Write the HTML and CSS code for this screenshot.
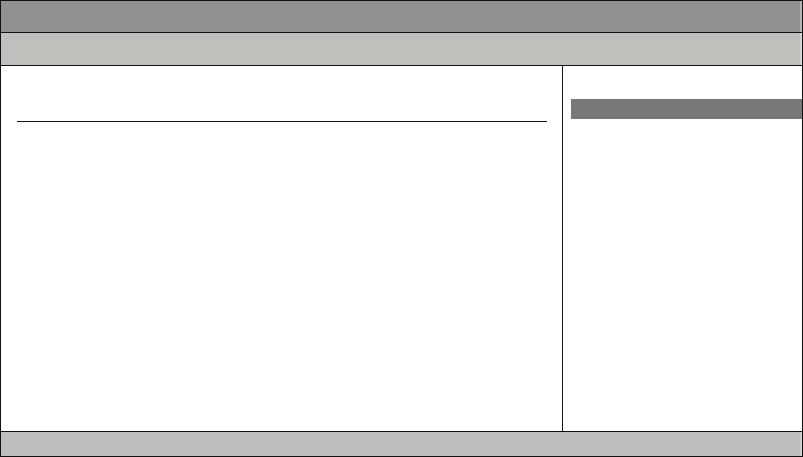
FILE: index.html
```html
<!DOCTYPE html>
<html lang="en">
<head>
<meta charset="utf-8">
<title>Setup</title>
<link rel="stylesheet" href="styles.css">
</head>
<body>
<div class="frame">
  <div class="title-bar"></div>
  <div class="menu-bar"></div>
  <div class="main">
    <div class="left-pane">
      <div class="rule"></div>
    </div>
    <div class="right-pane">
      <div class="help-bar"></div>
    </div>
  </div>
  <div class="status-bar"></div>
</div>
</body>
</html>
```
FILE: styles.css
```css
html, body {
  margin: 0;
  padding: 0;
  background: #ffffff;
  font-family: "Liberation Sans", Arial, sans-serif;
}
.frame {
  width: 803px;
  height: 457px;
  box-sizing: border-box;
  border: 1px solid #111111;
  display: flex;
  flex-direction: column;
}
.title-bar {
  height: 31px;
  background: #909290;
  border-bottom: 1px solid #111111;
  box-shadow: inset -2px 0 0 #b4b5b4;
}
.menu-bar {
  height: 32px;
  background: #c0bfbc;
  border-bottom: 1px solid #111111;
  box-shadow: inset -2px 0 0 #d4d3d1;
}
.main {
  height: 365px;
  border-bottom: 1px solid #111111;
  display: flex;
}
.left-pane {
  width: 562px;
  border-right: 1px solid #111111;
  padding: 55px 15px 0 16px;
  box-sizing: border-box;
}
.rule {
  height: 1px;
  background: #111111;
}
.right-pane {
  flex: 1;
  padding-top: 33px;
  padding-left: 8px;
}
.help-bar {
  height: 20px;
  background: #787878;
}
.status-bar {
  flex: 1;
  background: #bebdbb;
  box-shadow: inset -2px 0 0 #d0cfcd;
}
```
